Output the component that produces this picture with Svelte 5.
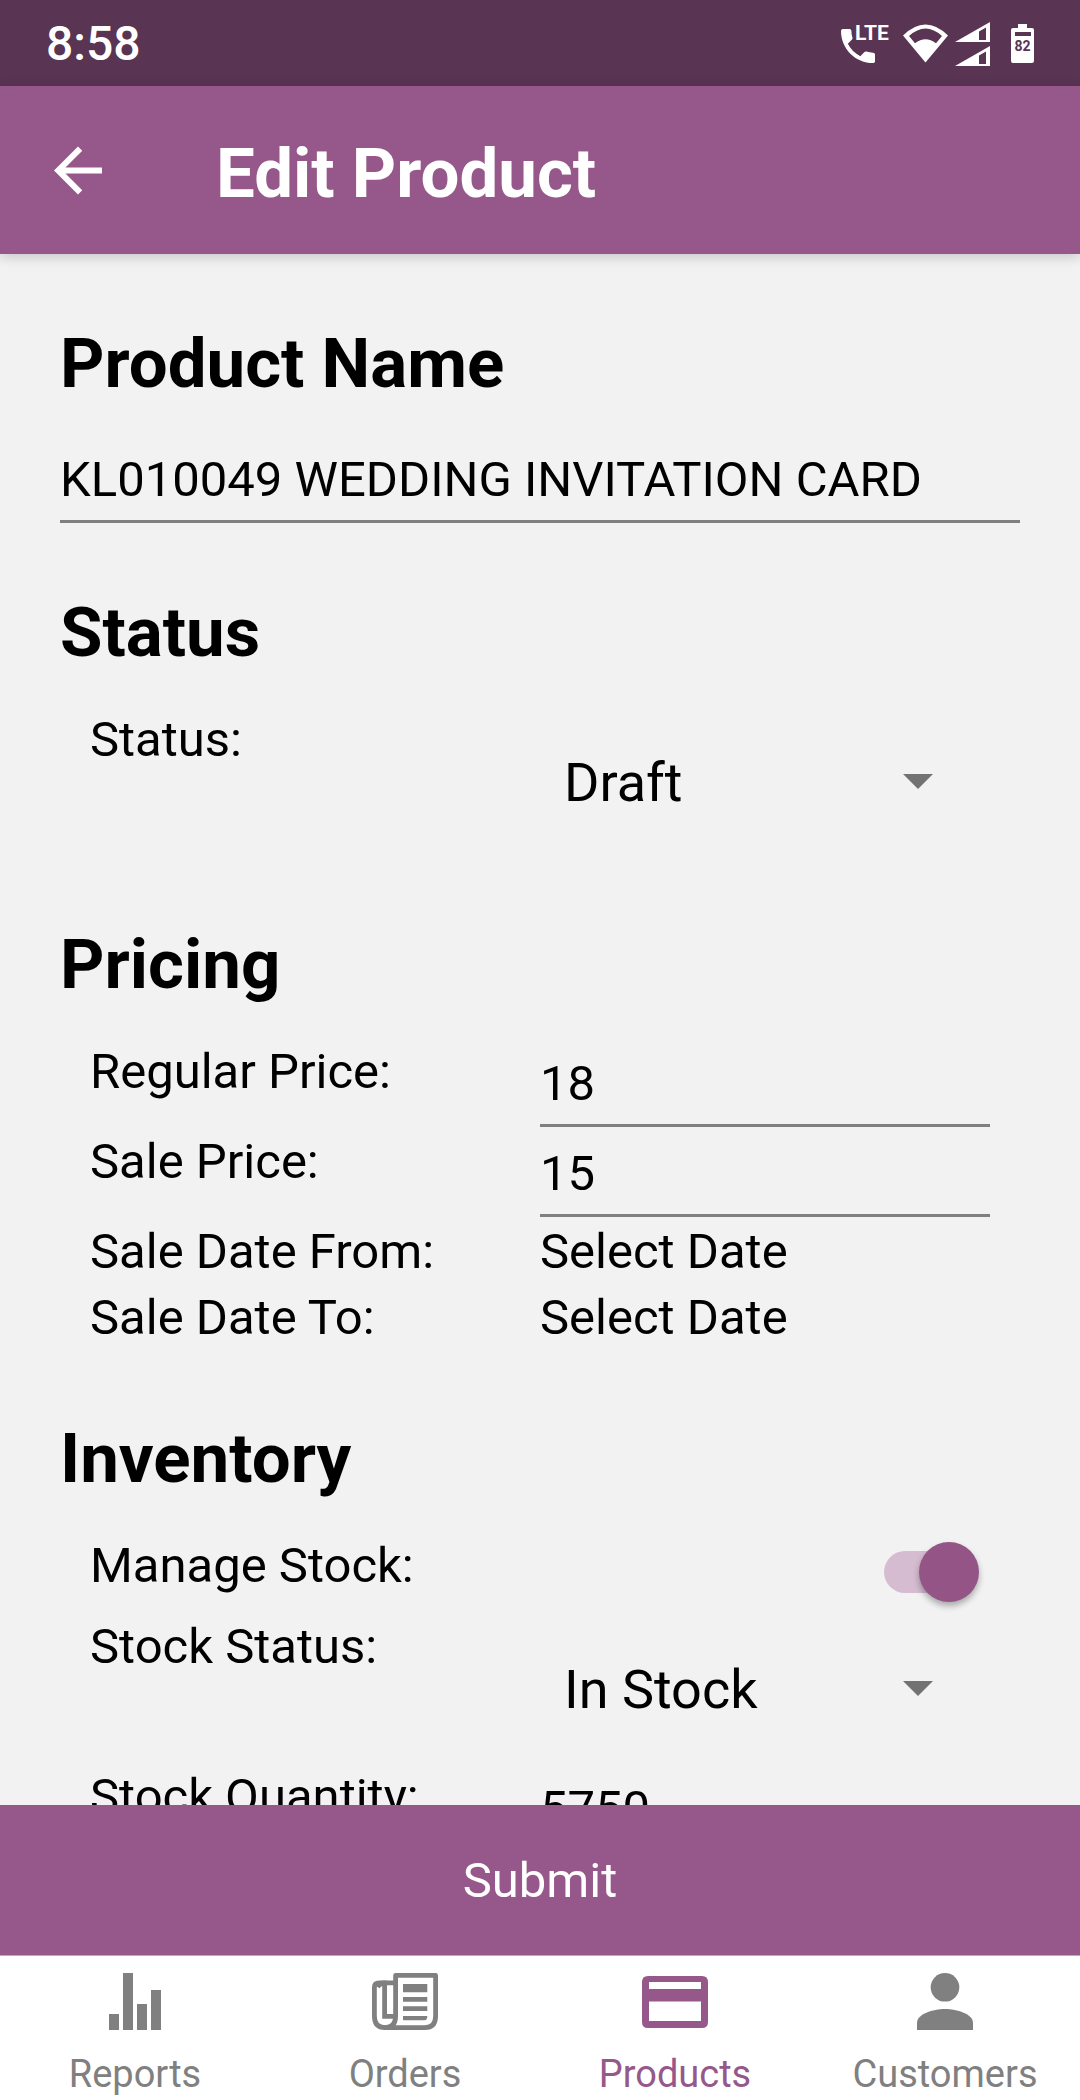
<script>
  let name = $state('KL010049 WEDDING INVITATION CARD');
  let status = $state('Draft');
  let regularPrice = $state('18');
  let salePrice = $state('15');
  let manageStock = $state(true);
  let stockStatus = $state('In Stock');
  let stockQuantity = $state('5750');
  let activeTab = $state('Products');

  const tabs = ['Reports', 'Orders', 'Products', 'Customers'];
</script>

{#snippet picker(id, options, get, set)}
  <span class="picker">
    <select {id} bind:value={get, set}>
      {#each options as option}
        <option>{option}</option>
      {/each}
    </select>
    <svg class="caret" viewBox="0 0 30 15" aria-hidden="true"><path d="M0 0h30L15 15z" /></svg>
  </span>
{/snippet}

<div class="app">
  <div class="statusbar">
    <span class="clock">8:58</span>
    <div class="indicators" aria-hidden="true">
      <svg class="call" viewBox="0 0 49 44">
        <path
          transform="translate(-5.67 1.33) scale(1.89)"
          d="M6.62 10.79c1.44 2.83 3.76 5.14 6.59 6.59l2.2-2.2c.27-.27.67-.36 1.02-.24 1.12.37 2.33.57 3.57.57.55 0 1 .45 1 1V20c0 .55-.45 1-1 1-9.39 0-17-7.61-17-17 0-.55.45-1 1-1h3.5c.55 0 1 .45 1 1 0 1.25.2 2.45.57 3.57.11.35.03.74-.25 1.02l-2.2 2.2z"
        />
        <text x="14" y="18">LTE</text>
      </svg>
      <svg class="wifi" viewBox="0 0 45 44">
        <path
          fill-rule="evenodd"
          d="M0 13.5Q22.5 -8.5 45 13.5L22.5 40.5zM6 14Q22.5 -1 39 14L33 21.3Q22.5 13.3 12 21.3z"
        />
      </svg>
      <svg class="signal" viewBox="0 0 35 44">
        <path fill-rule="evenodd" d="M0 20L35 0V20zM24 9.5V18H31V5.5z" />
        <path fill-rule="evenodd" d="M0 44L35 24V44zM24 33.5V42H31V29.5z" />
      </svg>
      <svg class="battery" viewBox="0 0 23 44">
        <path
          fill-rule="evenodd"
          d="M7 2h9v4h5q2 0 2 2v31q0 2-2 2H2q-2 0-2-2V8q0-2 2-2h5zM4 10v4h16v-4z"
        />
        <text x="11.5" y="29" text-anchor="middle">82</text>
      </svg>
    </div>
  </div>

  <header>
    <button class="back" type="button" aria-label="Back">
      <svg viewBox="0 0 24 24" aria-hidden="true">
        <path d="M20 11H7.83l5.59-5.59L12 4l-8 8 8 8 1.41-1.41L7.83 13H20v-2z" />
      </svg>
    </button>
    <h1>Edit Product</h1>
  </header>

  <form id="product" onsubmit={(e) => e.preventDefault()}>
    <section>
      <h2><label for="name">Product Name</label></h2>
      <div class="wide"><input id="name" type="text" bind:value={name} /></div>
    </section>

    <section>
      <h2>Status</h2>
      <div class="row">
        <label for="status">Status:</label>
        {@render picker('status', ['Draft', 'Pending', 'Private', 'Publish'], () => status, (v) => (status = v))}
      </div>
    </section>

    <section>
      <h2>Pricing</h2>
      <div class="row">
        <label for="regular">Regular Price:</label>
        <input id="regular" type="text" inputmode="decimal" bind:value={regularPrice} />
      </div>
      <div class="row">
        <label for="sale">Sale Price:</label>
        <input id="sale" type="text" inputmode="decimal" bind:value={salePrice} />
      </div>
      <div class="row">
        <label for="from">Sale Date From:</label>
        <button id="from" class="date" type="button">Select Date</button>
      </div>
      <div class="row">
        <label for="to">Sale Date To:</label>
        <button id="to" class="date" type="button">Select Date</button>
      </div>
    </section>

    <section>
      <h2>Inventory</h2>
      <div class="row">
        <label for="manage">Manage Stock:</label>
        <span class="toggle"><input id="manage" type="checkbox" role="switch" bind:checked={manageStock} /></span>
      </div>
      <div class="row">
        <label for="stock">Stock Status:</label>
        {@render picker('stock', ['In Stock', 'Out of Stock', 'On Backorder'], () => stockStatus, (v) => (stockStatus = v))}
      </div>
      <div class="row">
        <label for="quantity">Stock Quantity:</label>
        <input id="quantity" type="text" inputmode="numeric" bind:value={stockQuantity} />
      </div>
    </section>
  </form>

  <button class="submit" type="submit" form="product">Submit</button>

  <nav>
    {#each tabs as tab}
      <a
        href={'#' + tab.toLowerCase()}
        class:active={activeTab === tab}
        aria-current={activeTab === tab ? 'page' : undefined}
        onclick={() => (activeTab = tab)}
      >
        <svg viewBox="0 0 66 57" aria-hidden="true">
          {#if tab === 'Reports'}
            <path d="M7 41h10v16H7zM21 0h10v57H21zM35 31h10v26H35zM49 17h10v40H49z" />
          {:else if tab === 'Orders'}
            <g fill="none" stroke="currentColor" stroke-width="4.8" stroke-linejoin="round">
              <path d="M23.6 44V2.4H63.6V43Q63.6 54.6 53 54.6H12" />
              <path d="M22 9.8H7Q2.4 9.8 2.4 14V43Q2.4 54.6 13 54.6Q23.6 54.6 23.6 43" />
              <path d="M5.5 14Q8 9.8 12.6 10V43.4H22" stroke-linejoin="miter" />
            </g>
            <path d="M31 11h24.3v8.3H31zM31 24h24.3v4.7H31zM31 33.3h24.3v4.7H31zM31 43h24.3q0 4.3-3 4.3H31z" />
          {:else if tab === 'Products'}
            <path
              fill-rule="evenodd"
              d="M6 3H60q6 0 6 6V49q0 6-6 6H6q-6 0-6-6V9q0-6 6-6zM7 9v7H59V9zM7 28.5V48H59V28.5z"
            />
          {:else}
            <circle cx="33" cy="14.3" r="14.3" />
            <path d="M5 57V50C5 41 21 36 33 36S61 41 61 50V57z" />
          {/if}
        </svg>
        <span>{tab}</span>
      </a>
    {/each}
  </nav>
</div>

<style>
  :global(body) {
    margin: 0;
  }

  .app {
    --purple: #96588a;
    --ink: #000;
    --line: #808080;
    display: flex;
    flex-direction: column;
    height: 100vh;
    background: #f2f2f2;
    color: var(--ink);
    font: 400 49px/58px Roboto, sans-serif;
  }

  button,
  input,
  select {
    margin: 0;
    padding: 0;
    border: 0;
    border-radius: 0;
    background: none;
    color: inherit;
    font: inherit;
    outline: none;
  }

  svg {
    display: block;
    fill: currentColor;
  }

  .statusbar {
    flex: none;
    display: flex;
    align-items: center;
    justify-content: space-between;
    height: 84px;
    padding: 2px 46px 0;
    background: #593453;
    color: #fff;
  }

  .clock {
    font-size: 48px;
    font-weight: 500;
  }

  .indicators {
    display: flex;
    gap: 7px;
  }

  .indicators svg {
    height: 44px;
  }

  .call {
    width: 49px;
    margin-right: 6px;
  }

  .call text {
    font-size: 21px;
    font-weight: 700;
  }

  .wifi {
    width: 45px;
  }

  .signal {
    width: 35px;
    margin-right: 14px;
  }

  .battery {
    width: 23px;
  }

  .battery text {
    font-size: 14px;
    font-weight: 700;
    fill: #593453;
  }

  header {
    flex: none;
    position: relative;
    z-index: 1;
    display: flex;
    align-items: flex-start;
    gap: 102px;
    height: 121px;
    padding: 47px 42px 0;
    background: var(--purple);
    color: #fff;
    box-shadow: 0 3px 12px rgba(0, 0, 0, 0.18);
  }

  .back svg {
    width: 72px;
    height: 75px;
  }

  h1,
  h2 {
    margin: 0;
    font-size: 69px;
    font-weight: 700;
    line-height: 81px;
  }

  form {
    flex: 1;
    min-height: 0;
    display: flex;
    flex-direction: column;
    gap: 66px;
    padding: 69px 60px 0;
    overflow-y: auto;
    scrollbar-width: none;
  }

  section {
    flex: none;
  }

  h2 {
    margin-bottom: 35px;
  }

  .wide {
    padding-bottom: 3px;
  }

  .row {
    display: grid;
    grid-template-columns: 1fr 1fr;
    align-items: start;
    min-height: 60px;
    padding: 3px 30px;
  }

  input[type='text'] {
    display: block;
    box-sizing: border-box;
    width: 100%;
    height: 84px;
    border-bottom: 3px solid var(--line);
  }

  .picker {
    display: grid;
    align-items: center;
  }

  .picker > * {
    grid-area: 1 / 1;
  }

  select {
    appearance: none;
    width: 100%;
    height: 144px;
    padding: 0 96px 0 24px;
    font-size: 54px;
    line-height: 66px;
  }

  .caret {
    justify-self: end;
    width: 30px;
    height: 15px;
    margin: 0 57px 3px 0;
    fill: #727272;
    pointer-events: none;
  }

  .date {
    text-align: left;
  }

  .toggle {
    display: flex;
    align-items: center;
    justify-content: flex-end;
    height: 69px;
    padding: 0 20px 6px 0;
  }

  input[type='checkbox'] {
    appearance: none;
    display: flex;
    align-items: center;
    width: 86px;
    height: 42px;
    border-radius: 21px;
    background: #c4c4c4;
  }

  input[type='checkbox']::before {
    content: '';
    flex: none;
    width: 60px;
    height: 60px;
    margin-left: -9px;
    border-radius: 50%;
    background: #fafafa;
    box-shadow: 0 4px 6px rgba(0, 0, 0, 0.3);
  }

  input[type='checkbox']:checked {
    background: #d5bcd1;
  }

  input[type='checkbox']:checked::before {
    margin-left: 35px;
    background: #945586;
  }

  .submit {
    flex: none;
    height: 150px;
    padding-top: 2px;
    background: var(--purple);
    color: #fff;
    text-align: center;
  }

  nav {
    flex: none;
    display: grid;
    grid-template-columns: repeat(4, 1fr);
    padding: 17px 0 3px;
    border-top: 1px solid #b2b2b2;
    background: #fff;
  }

  nav a {
    display: flex;
    flex-direction: column;
    align-items: center;
    gap: 22px;
    color: var(--line);
    font-size: 38px;
    line-height: 45px;
    text-decoration: none;
  }

  nav a.active {
    color: var(--purple);
  }

  nav svg {
    width: 66px;
    height: 57px;
  }
</style>
